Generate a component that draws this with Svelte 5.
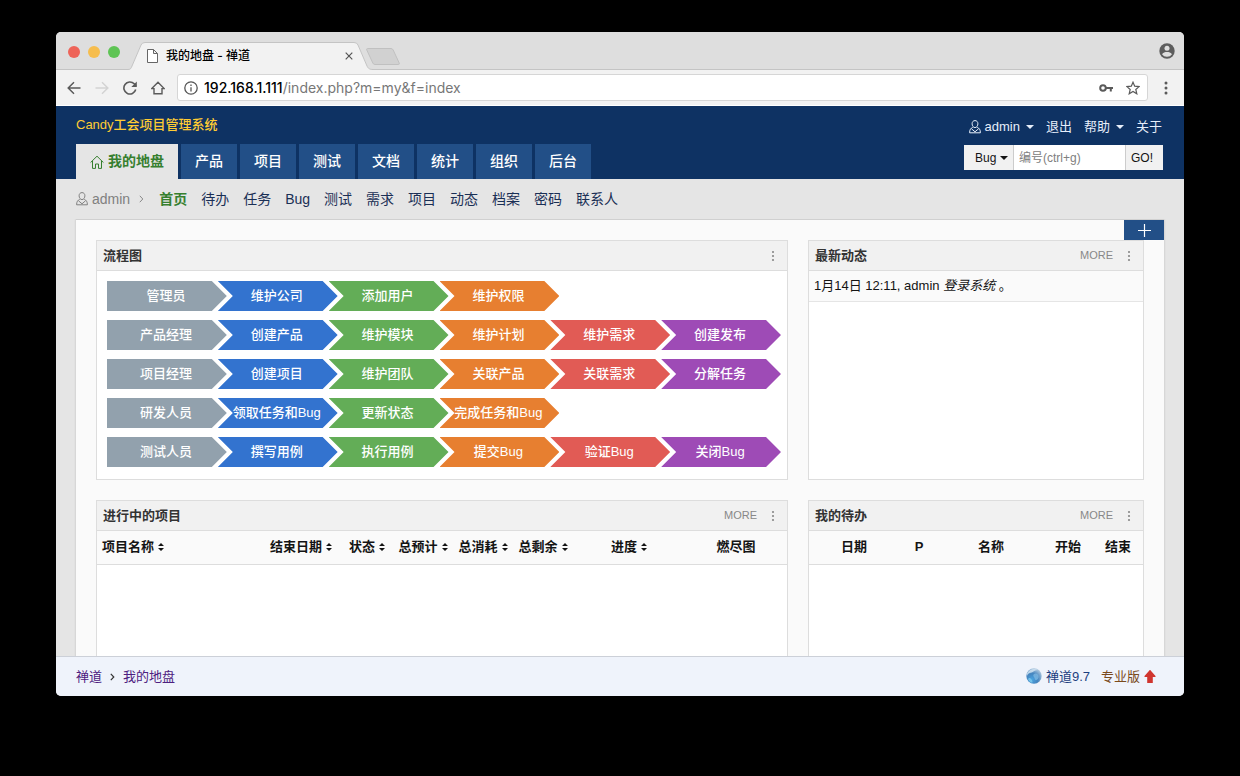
<script>
  /**
   * Dashboard page of the project manager, shown inside a browser window:
   * tab strip, address bar, main menu, sub menu, four panels and footer.
   */

  const modules = ['产品', '项目', '测试', '文档', '统计', '组织', '后台'];
  const subMenu = ['首页', '待办', '任务', 'Bug', '测试', '需求', '项目', '动态', '档案', '密码', '联系人'];

  const flow = [
    ['管理员', '维护公司', '添加用户', '维护权限'],
    ['产品经理', '创建产品', '维护模块', '维护计划', '维护需求', '创建发布'],
    ['项目经理', '创建项目', '维护团队', '关联产品', '关联需求', '分解任务'],
    ['研发人员', '领取任务和Bug', '更新状态', '完成任务和Bug'],
    ['测试人员', '撰写用例', '执行用例', '提交Bug', '验证Bug', '关闭Bug'],
  ];

  const projectColumns = [
    { label: '项目名称', cls: 'name', sortable: true },
    { label: '结束日期', cls: 'date', sortable: true },
    { label: '状态', cls: 'status', sortable: true },
    { label: '总预计', cls: 'hours', sortable: true },
    { label: '总消耗', cls: 'hours', sortable: true },
    { label: '总剩余', cls: 'hours', sortable: true },
    { label: '进度', cls: 'progress', sortable: true },
    { label: '燃尽图', cls: 'burn', sortable: false },
  ];

  const todoColumns = [
    { label: '日期', cls: 'day' },
    { label: 'P', cls: 'pri' },
    { label: '名称', cls: 'title' },
    { label: '开始', cls: 'time' },
    { label: '结束', cls: 'time' },
  ];

  let active = $state('首页');
  let searchType = $state('Bug');
  let searchId = $state('');
</script>

{#snippet userIcon()}
  <svg class="user-icon" width="12" height="14" viewBox="0 0 12 14" fill="none" stroke="currentColor">
    <path d="M6 .6C4.200.6 3.100 1.900 3.100 3.800S4.300 7.600 6 7.600s2.900-1.900 2.900-3.800S7.800.6 6 .6z" />
    <path d="M3.800 7.200C1.800 8.300.6 9.500.6 12.800h10.800c0-3.300-1.200-4.500-3.200-5.600M2.500 8.800 6 11.800l3.500-3" />
  </svg>
{/snippet}

{#snippet caret()}
  <svg class="caret" width="8" height="4" viewBox="0 0 8 4" fill="currentColor"><path d="M0 0h8L4 4z" /></svg>
{/snippet}

{#snippet panelHead(title, more)}
  <header class="panel-head">
    <h2>{title}</h2>
    {#if more}<a class="more" href="#more">MORE</a>{/if}
    <button class="dots" aria-label="更多操作">
      <svg width="4" height="12" viewBox="0 0 4 12" fill="currentColor">
        <circle cx="2" cy="2" r="1.100" /><circle cx="2" cy="6" r="1.100" /><circle cx="2" cy="10" r="1.100" />
      </svg>
    </button>
  </header>
{/snippet}

<div class="window">
  <div class="tabstrip">
    <div class="lights"><i class="close"></i><i class="min"></i><i class="max"></i></div>
    <div class="tab">
      <svg class="tab-shape" viewBox="0 0 246 28" preserveAspectRatio="none">
        <path d="M0 27.500C3 27.500 3 26 4 24L13 3Q14 .5 17 .5H226Q229 .5 230 3L239 24C240 26 241 27.500 245 27.500V28H0z" fill="#f2f2f2" />
        <path d="M0 27.500C3 27.500 3 26 4 24L13 3Q14 .5 17 .5H226Q229 .5 230 3L239 24C240 26 241 27.500 245 27.500" fill="none" stroke="#c4c4c4" />
      </svg>
      <svg class="file" width="11" height="14" viewBox="0 0 11 14" fill="#fff" stroke="#666">
        <path d="M.5.5h6l4 4v9H.5zM6.500.5v4h4" />
      </svg>
      <span class="tab-title">我的地盘 - 禅道</span>
      <button class="tab-close" aria-label="关闭标签页">
        <svg width="8" height="8" viewBox="0 0 8 8" stroke="#555" stroke-width="1.200"><path d="m.7.7 6.600 6.600M7.300.7.7 7.300" /></svg>
      </button>
    </div>
    <button class="new-tab" aria-label="新标签页">
      <svg width="34" height="17" viewBox="0 0 34 17" fill="#d1d1d1" stroke="#c0c0c0">
        <path d="M1.500.5H25q1.500 0 2.200 1.500l6 13q.6 1.500-1 1.500H9q-1.500 0-2.200-1.500L.8 2Q.3.500 1.500.5z" />
      </svg>
    </button>
    <button class="profile" aria-label="个人资料">
      <svg width="16" height="16" viewBox="0 0 16 16">
        <circle cx="8" cy="8" r="7.700" fill="#5d5d5d" />
        <circle cx="8" cy="5.200" r="2.500" fill="#dedede" />
        <path d="M3 11.200C4 9.300 6 8.900 8 8.900s4 .4 5 2.300A6 6 0 0 1 8 13.800a6 6 0 0 1-5-2.600z" fill="#dedede" />
      </svg>
    </button>
  </div>

  <div class="toolbar">
    <button aria-label="后退">
      <svg width="14" height="14" viewBox="0 0 14 14" fill="none" stroke="#5a5a5a" stroke-width="1.500"><path d="M13.500 7H1.500M7 1.200 1.200 7 7 12.800" /></svg>
    </button>
    <button aria-label="前进">
      <svg width="14" height="14" viewBox="0 0 14 14" fill="none" stroke="#d3d3d3" stroke-width="1.500"><path d="M.5 7h12M7 1.200 12.800 7 7 12.800" /></svg>
    </button>
    <button aria-label="重新加载">
      <svg width="14" height="14" viewBox="0 0 14 14" fill="none" stroke="#5a5a5a" stroke-width="1.600"><path d="M12.700 8.500A6 6 0 1 1 11.200 2.800L13 4.800" /><path d="M13.800.5v5.500H8.300z" fill="#5a5a5a" stroke="none" /></svg>
    </button>
    <button aria-label="主页">
      <svg width="14" height="14" viewBox="0 0 14 14" fill="none" stroke="#5a5a5a" stroke-width="1.400"><path d="M.8 7.600 7 1.300l6.200 6.300H11v5.200H3V7.600z" /></svg>
    </button>
    <div class="address">
      <svg width="14" height="14" viewBox="0 0 14 14" fill="none" stroke="#555" stroke-width="1.300"><circle cx="7" cy="7" r="6.200" /><path d="M7 6.200v4.200M7 3.500v1.500" /></svg>
      <span class="url"><b>192.168.1.111</b>/index.php?m=my&amp;f=index</span>
      <svg width="14" height="8" viewBox="0 0 14 8" fill="none" stroke="#5a5a5a" stroke-width="2"><circle cx="4" cy="4" r="2.800" /><path d="M7 4h7M11.800 4v3.500" /></svg>
      <svg class="star" width="14" height="14" viewBox="0 0 14 14" fill="none" stroke="#5a5a5a" stroke-width="1.200"><path d="m7 1.200 1.700 4 4.400.4-3.300 2.900 1 4.300L7 10.500l-3.800 2.300 1-4.300L.9 5.600l4.400-.4z" /></svg>
    </div>
    <button class="menu" aria-label="菜单">
      <svg width="4" height="14" viewBox="0 0 4 14" fill="#5a5a5a"><circle cx="2" cy="2" r="1.500" /><circle cx="2" cy="7" r="1.500" /><circle cx="2" cy="12" r="1.500" /></svg>
    </button>
  </div>

  <header class="header">
    <div class="header-left">
      <h1>Candy工会项目管理系统</h1>
      <nav class="modules">
        <a class="current" href="#my">
          <svg width="14" height="14" viewBox="0 0 14 14" fill="none" stroke="currentColor"><path d="M.6 7.500 7 1.200l6.400 6.300M2.500 6v7.400h3V9h3v4.400h3V6" /></svg>我的地盘
        </a>
        {#each modules as name}
          <a href="#module">{name}</a>
        {/each}
      </nav>
    </div>
    <div class="header-right">
      <div class="account">
        <button>{@render userIcon()}admin{@render caret()}</button>
        <a href="#logout">退出</a>
        <button>帮助{@render caret()}</button>
        <a href="#about">关于</a>
      </div>
      <form class="search" onsubmit={(e) => e.preventDefault()}>
        <label class="type">
          <select bind:value={searchType} aria-label="类型">
            <option>Bug</option>
            <option>任务</option>
            <option>需求</option>
          </select>
          {@render caret()}
        </label>
        <input type="text" aria-label="编号" placeholder="编号(ctrl+g)" bind:value={searchId} />
        <button type="submit">GO!</button>
      </form>
    </div>
  </header>

  <nav class="submenu">
    <span class="who">{@render userIcon()}admin</span>
    <svg class="sep" width="5" height="8" viewBox="0 0 5 8" fill="none" stroke="#888"><path d="m.8.8 3 3.200-3 3.200" /></svg>
    {#each subMenu as item}
      <a href="#sub" class:active={active === item} onclick={() => (active = item)}>{item}</a>
    {/each}
  </nav>

  <main>
    <div class="board">
      <button class="add" aria-label="添加区块">
        <svg width="13" height="13" viewBox="0 0 13 13" stroke="#fff" stroke-width="1.200"><path d="M6.500 0v13M0 6.500h13" /></svg>
      </button>

      <section class="panel wide">
        {@render panelHead('流程图', false)}
        <div class="flow">
          {#each flow as steps}
            <div class="flow-row">
              {#each steps as step, i}
                <div class="step step-{i}">{step}</div>
              {/each}
            </div>
          {/each}
        </div>
      </section>

      <section class="panel">
        {@render panelHead('最新动态', true)}
        <ul class="news">
          <li>1月14日 12:11, admin <em>登录系统</em> 。</li>
        </ul>
      </section>

      <section class="panel wide">
        {@render panelHead('进行中的项目', true)}
        <table>
          <thead>
            <tr>
              {#each projectColumns as col}
                <th class={col.cls}>
                  {#if col.sortable}
                    <a href="#sort">{col.label}<svg width="6" height="8" viewBox="0 0 6 8" fill="currentColor"><path d="M0 3h6L3 0zM0 5h6L3 8z" /></svg></a>
                  {:else}
                    {col.label}
                  {/if}
                </th>
              {/each}
            </tr>
          </thead>
        </table>
      </section>

      <section class="panel">
        {@render panelHead('我的待办', true)}
        <table>
          <thead>
            <tr>
              {#each todoColumns as col}
                <th class={col.cls}>{col.label}</th>
              {/each}
            </tr>
          </thead>
        </table>
      </section>
    </div>
  </main>

  <footer class="footer">
    <a href="#home">禅道</a>
    <svg width="5" height="8" viewBox="0 0 5 8" fill="none" stroke="#333" stroke-width="1.200"><path d="m.8.8 3 3.200-3 3.200" /></svg>
    <a href="#my">我的地盘</a>
    <div class="version">
      <a class="zentao" href="#version">
        <svg width="16" height="18" viewBox="0 0 16 18">
          <defs>
            <radialGradient id="globe" cx=".38" cy=".72" r=".75">
              <stop offset="0" stop-color="#4ba3e0" />
              <stop offset=".5" stop-color="#4585bf" />
              <stop offset="1" stop-color="#b4cbe0" />
            </radialGradient>
          </defs>
          <circle cx="8" cy="8" r="7.700" fill="url(#globe)" />
          <path d="M1 5.500C3 1.500 8-.5 12 2 9 2 7 4 5.500 4.500S2 5 1 8z" fill="#d6e6f2" opacity=".8" />
          <path d="M8 6c2-1.500 4 0 4.500 2s-1 4-2.500 4-1-2-2-3-1-2 0-3z" fill="#85bde6" opacity=".7" />
          <path d="M2 11c1-1.500 2.500-1 3.500.5S7 14 6 14.800C4 14.300 2.800 13 2 11z" fill="#7dccef" opacity=".8" />
        </svg>禅道9.7
      </a>
      <a class="pro" href="#pro">
        专业版<svg width="12" height="16" viewBox="0 0 12 16" fill="#d0352f"><path d="M6 .8 11.500 7v1H8.800v6H3.200V8H.5V7z" /></svg>
      </a>
    </div>
  </footer>
</div>

<style>
  :global(body) {
    margin: 0;
    background: #000;
  }

  * {
    box-sizing: border-box;
  }

  .window {
    display: flex;
    flex-direction: column;
    height: calc(100vh - 112px);
    margin: 32px 56px 80px;
    overflow: hidden;
    border-radius: 5px;
    background: #e5e5e5;
    color: #141414;
    font: 13px/20px "Liberation Sans", "Noto Sans CJK SC", sans-serif;
  }

  a {
    color: inherit;
    text-decoration: none;
  }

  button {
    display: flex;
    align-items: center;
    padding: 0;
    border: 0;
    background: none;
    color: inherit;
    font: inherit;
    cursor: pointer;
  }

  svg {
    flex-shrink: 0;
  }

  /* Browser chrome */
  .tabstrip {
    display: flex;
    flex-shrink: 0;
    align-items: flex-end;
    height: 38px;
    padding-right: 9px;
    border-bottom: 1px solid #c4c4c4;
    background: #dedede;
  }

  .lights {
    display: flex;
    gap: 8px;
    align-self: center;
    padding: 2px 8px 0 12px;
  }

  .lights i {
    width: 12px;
    height: 12px;
    border-radius: 50%;
  }

  .close { background: #ee6459; }
  .min { background: #f6bd4d; }
  .max { background: #5ec454; }

  .tab {
    position: relative;
    display: flex;
    align-items: center;
    width: 246px;
    height: 28px;
    margin-bottom: -1px;
    padding: 0 21px 0 19px;
  }

  .tab-shape {
    position: absolute;
    inset: 0;
    width: 100%;
    height: 100%;
  }

  .file,
  .tab-title,
  .tab-close {
    position: relative;
  }

  .tab-title {
    flex: 1;
    margin-left: 8px;
    color: #000;
    font: 500 12px/20px Inter, "Noto Sans CJK SC", sans-serif;
  }

  .new-tab {
    margin: 0 auto 4px -8px;
  }

  .profile {
    align-self: center;
  }

  .toolbar {
    display: flex;
    flex-shrink: 0;
    align-items: center;
    gap: 14px;
    height: 36px;
    padding-left: 11px;
    border-bottom: 1px solid #fff;
    background: #f2f2f2;
  }

  .address {
    display: flex;
    flex: 1;
    align-items: center;
    height: 27px;
    margin-left: -2px;
    padding: 0 7px 0 6px;
    border: 1px solid #d6d6d6;
    border-radius: 3px;
    background: #fff;
  }

  .url {
    flex: 1;
    margin-left: 6px;
    color: #777;
    font: 14px/20px Inter, Roboto, sans-serif;
  }

  .url b {
    color: #000;
    font-weight: 500;
  }

  .star {
    margin-left: 13px;
  }

  .toolbar .menu {
    justify-content: center;
    width: 8px;
    margin-right: 14px;
  }

  /* Page header */
  .header {
    display: flex;
    flex-shrink: 0;
    justify-content: space-between;
    height: 73px;
    padding: 0 21px 0 20px;
    background: #0e3263;
  }

  .header-left,
  .header-right {
    display: flex;
    flex-direction: column;
    justify-content: space-between;
  }

  h1 {
    margin: 9px 0 0;
    color: #fc3;
    font-size: 13px;
    font-weight: 500;
    line-height: 20px;
  }

  .modules {
    display: flex;
    gap: 3px;
    color: #fff;
    font-size: 14px;
    font-weight: 500;
    line-height: 35px;
  }

  .modules a {
    padding: 0 14px;
    background: #224f87;
  }

  .modules .current {
    display: flex;
    align-items: center;
    gap: 4px;
    background: #e5e5e5;
    color: #367f2f;
    font-weight: 700;
  }

  .header-right {
    align-items: flex-end;
    padding: 11px 0 9px;
  }

  .account {
    display: flex;
    gap: 12px;
    margin-right: 1px;
    color: #e6eefa;
  }

  .user-icon {
    margin-right: 4px;
  }

  .caret {
    margin-left: 6px;
  }

  .search {
    display: flex;
    height: 25px;
    color: #141414;
    font-size: 12px;
  }

  .type {
    display: flex;
    align-items: center;
    width: 50px;
    padding-left: 11px;
    border-right: 1px solid #ccc;
    background: #f1f1f1;
  }

  .type .caret {
    margin-left: 2px;
  }

  .search select {
    width: 23px;
    padding: 0;
    border: 0;
    appearance: none;
    background: none;
    color: inherit;
    font: inherit;
  }

  .search input {
    width: 112px;
    padding: 0 5px;
    border: 0;
    border-right: 1px solid #ccc;
    border-radius: 0;
    background: #fff;
    font: inherit;
  }

  .search input::placeholder {
    color: #808080;
  }

  .search button {
    width: 37px;
    padding-left: 5px;
    background: #f1f1f1;
  }

  .submenu {
    display: flex;
    flex-shrink: 0;
    align-items: center;
    gap: 14px;
    height: 40px;
    padding: 0 20px;
    color: #1a2f55;
    font-size: 14px;
  }

  .who {
    display: flex;
    align-items: center;
    color: #808080;
  }

  .sep {
    margin: 0 1px 0 -5px;
  }

  .submenu .active {
    color: #367f2f;
    font-weight: 700;
  }

  /* Panels */
  main {
    flex: 1;
    min-height: 0;
    padding: 0 20px;
    overflow: hidden;
  }

  .board {
    position: relative;
    display: grid;
    grid-template-columns: repeat(12, 1fr);
    grid-auto-rows: 240px;
    gap: 20px;
    padding: 20px;
    border-top: 1px solid #d0d0d0;
    background: #fafafa;
    box-shadow: 0 0 2px #bbb;
  }

  .add {
    position: absolute;
    top: 0;
    right: 0;
    justify-content: center;
    width: 40px;
    height: 20px;
    background: #224f87;
  }

  .panel {
    grid-column: span 4;
    min-width: 0;
    border: 1px solid #ddd;
    background: #fff;
  }

  .panel.wide {
    grid-column: span 8;
  }

  .panel-head {
    display: flex;
    align-items: center;
    height: 30px;
    padding: 0 12px 0 6px;
    border-bottom: 1px solid #ddd;
    background: #f1f1f1;
  }

  h2 {
    flex: 1;
    margin: 0;
    font-size: 13px;
    font-weight: 700;
    color: #333;
  }

  .more {
    margin-right: 14px;
    padding-bottom: 2px;
    color: #888;
    font-size: 11px;
  }

  .dots {
    color: #888;
  }

  .flow {
    display: grid;
    gap: 9px;
    padding: 10px 15px 10px 10px;
  }

  .flow-row {
    display: grid;
    grid-template-columns: repeat(6, 1fr);
  }

  .step {
    height: 30px;
    margin-right: -9px;
    padding-right: 2px;
    clip-path: polygon(0 0, calc(100% - 15px) 0, 100% 50%, calc(100% - 15px) 100%, 0 100%, 15px 50%);
    color: #fff;
    font-weight: 500;
    line-height: 30px;
    text-align: center;
    white-space: nowrap;
  }

  .step-0 {
    clip-path: polygon(0 0, calc(100% - 15px) 0, 100% 50%, calc(100% - 15px) 100%, 0 100%);
    background: #92a1ad;
  }

  .step-1 { background: #3373cf; }
  .step-2 { background: #63ad57; }
  .step-3 { background: #e77f30; }
  .step-4 { background: #e15b55; }
  .step-5 { background: #9e4bb6; }

  .news {
    margin: 0;
    padding: 0;
    list-style: none;
  }

  .news li {
    padding: 5px;
    border-bottom: 1px solid #e5e5e5;
    background: #fafafa;
  }

  table {
    width: 100%;
    border-collapse: collapse;
    table-layout: fixed;
  }

  th {
    height: 33px;
    padding: 0;
    border-bottom: 1px solid #ddd;
    background: #fafafa;
    font-weight: 700;
    white-space: nowrap;
  }

  th svg {
    margin-left: 4px;
  }

  .name {
    padding-left: 5px;
    text-align: left;
  }

  .date { width: 80px; }
  .status { width: 52px; }
  .hours { width: 60px; }
  .progress { width: 112px; }
  .burn { width: 102px; }
  .day { width: 90px; }
  .pri { width: 40px; }
  .time { width: 50px; }

  /* Footer */
  .footer {
    display: flex;
    flex-shrink: 0;
    align-items: center;
    gap: 8px;
    height: 40px;
    padding: 0 28px 0 20px;
    border-top: 1px solid #ccd0d8;
    background: #eff3fb;
    color: #4d2080;
  }

  .version {
    display: flex;
    gap: 11px;
    margin-left: auto;
  }

  .version a {
    display: flex;
    align-items: center;
    gap: 4px;
  }

  .zentao {
    color: #1d3f80;
  }

  .pro {
    color: #7a4a1c;
  }
</style>
